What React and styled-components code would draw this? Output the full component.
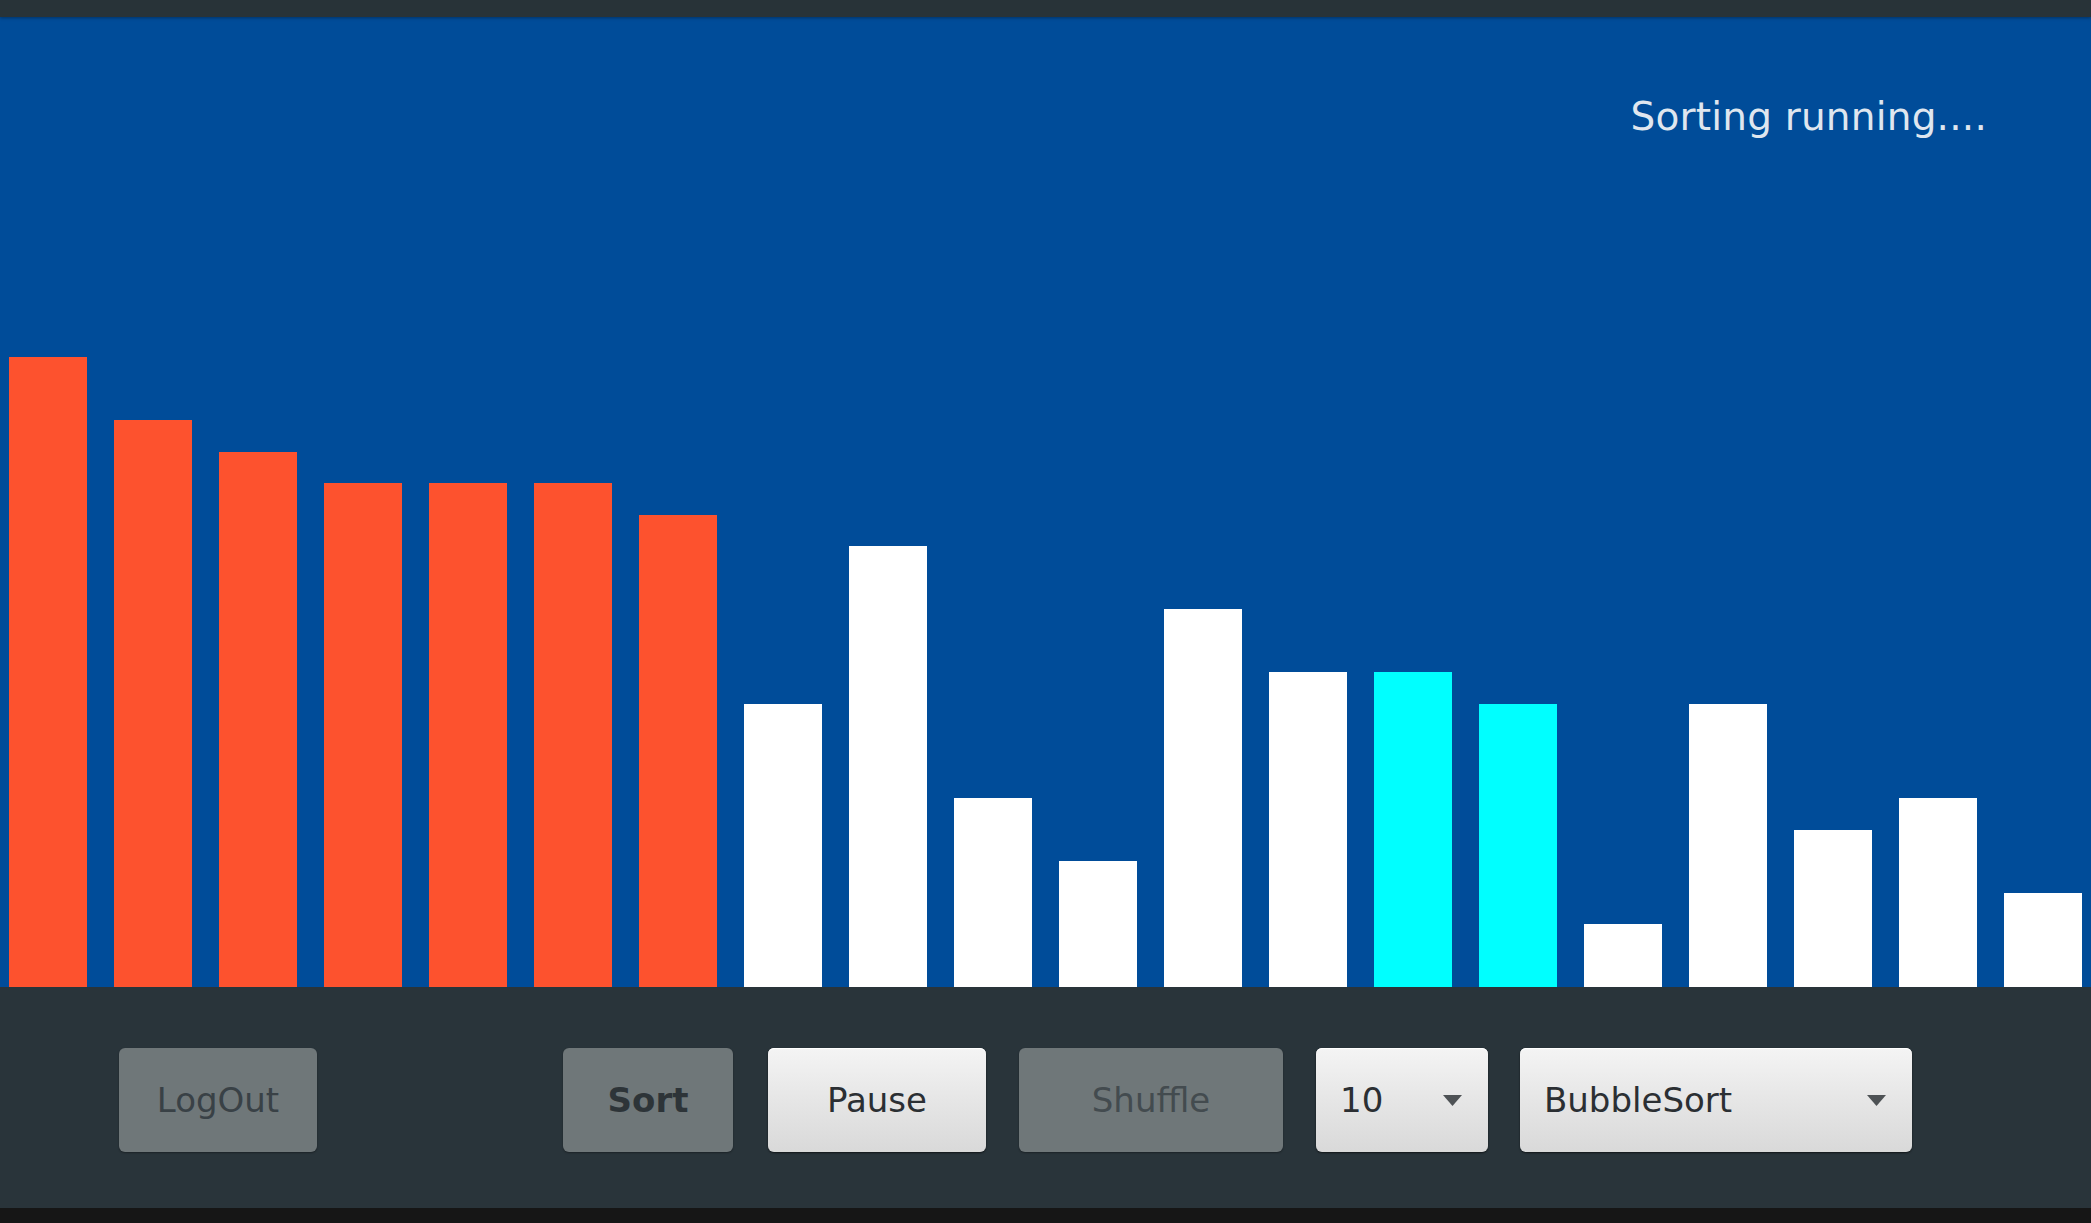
import styled, {createGlobalStyle} from 'styled-components';

const GlobalStyle = createGlobalStyle`
  html, body {
    margin: 0;
    padding: 0;
    background: #161616;
  }
  body {
    font-family: "DejaVu Sans", "Liberation Sans", sans-serif;
  }
`;

const values = [20, 18, 17, 16, 16, 16, 15, 9, 14, 6, 4, 12, 10, 10, 9, 2, 9, 5, 6, 3];
const SORTED_FROM = 0;
const SORTED_TO = 7;
const COMPARING = [13, 14];
const UNIT = 31.5;

const Screen = styled.div`
  display: flex;
  flex-direction: column;
  width: 2091px;
  height: 1223px;
  overflow: hidden;
`;

const TitleStrip = styled.div`
  height: 17px;
  background: #283338;
  box-shadow: 0 1px 3px rgba(0, 0, 0, 0.35);
  position: relative;
  z-index: 1;
`;

const Canvas = styled.div`
  position: relative;
  height: 970px;
  background: #004c99;
  display: flex;
  align-items: flex-end;
  gap: 27px;
  padding-left: 9px;
`;

const Status = styled.div`
  position: absolute;
  top: 77px;
  right: 104px;
  font-size: 39px;
  color: #dfe6ef;
  letter-spacing: 0.2px;
`;

const barColors = {
  sorted: '#fd522e',
  compare: '#00ffff',
  idle: '#ffffff',
};

const Bar = styled.div`
  width: 78px;
  flex-shrink: 0;
  background: ${({$state}) => barColors[$state]};
`;

const ControlPanel = styled.div`
  height: 221px;
  box-sizing: border-box;
  background: #29343a;
  display: flex;
  align-items: flex-start;
  padding: 61px 0 0 119px;
`;

const Button = styled.div`
  box-sizing: border-box;
  height: 104px;
  width: ${({$w}) => $w}px;
  margin-left: ${({$gap}) => $gap || 0}px;
  border-radius: 6px;
  display: flex;
  align-items: center;
  justify-content: center;
  font-size: 34px;
  font-weight: ${({$bold}) => ($bold ? 700 : 400)};
  color: ${({$light, $muted, $bold}) =>
    $light ? '#2b2f33' : $muted ? '#434b4f' : $bold ? '#2d3438' : '#394146'};
  background: ${({$light}) =>
    $light ? 'linear-gradient(#f4f4f4, #e6e6e6 50%, #d9d9d9)' : '#6f7779'};
  box-shadow: ${({$light}) =>
    $light ? '0 1px 2px rgba(0, 0, 0, 0.6), inset 0 1px 0 #ffffff' : '0 1px 2px rgba(0, 0, 0, 0.35)'};
`;

const Combo = styled(Button)`
  justify-content: space-between;
  padding: 0 26px 0 24px;
  color: #2b2f33;
`;

const Arrow = () => (
  <svg width="19" height="11" viewBox="0 0 19 11">
    <polygon points="0,0 19,0 9.5,11" fill="#4e5255" />
  </svg>
);

const BottomStrip = styled.div`
  height: 15px;
  background: #161616;
`;

const barState = (i) => {
  if (i >= SORTED_FROM && i < SORTED_TO) return 'sorted';
  if (COMPARING.includes(i)) return 'compare';
  return 'idle';
};

export default function App() {
  return (
    <>
      <GlobalStyle />
      <Screen>
        <TitleStrip />
        <Canvas>
          <Status>Sorting running....</Status>
          {values.map((v, i) => (
            <Bar key={i} $state={barState(i)} style={{height: v * UNIT}} />
          ))}
        </Canvas>
        <ControlPanel>
          <Button $w={198}>LogOut</Button>
          <Button $w={170} $gap={246} $bold>
            Sort
          </Button>
          <Button $w={218} $gap={35} $light>
            Pause
          </Button>
          <Button $w={264} $gap={33} $muted>
            Shuffle
          </Button>
          <Combo $w={172} $gap={33} $light>
            <span>10</span>
            <Arrow />
          </Combo>
          <Combo $w={392} $gap={32} $light>
            <span>BubbleSort</span>
            <Arrow />
          </Combo>
        </ControlPanel>
        <BottomStrip />
      </Screen>
    </>
  );
}
